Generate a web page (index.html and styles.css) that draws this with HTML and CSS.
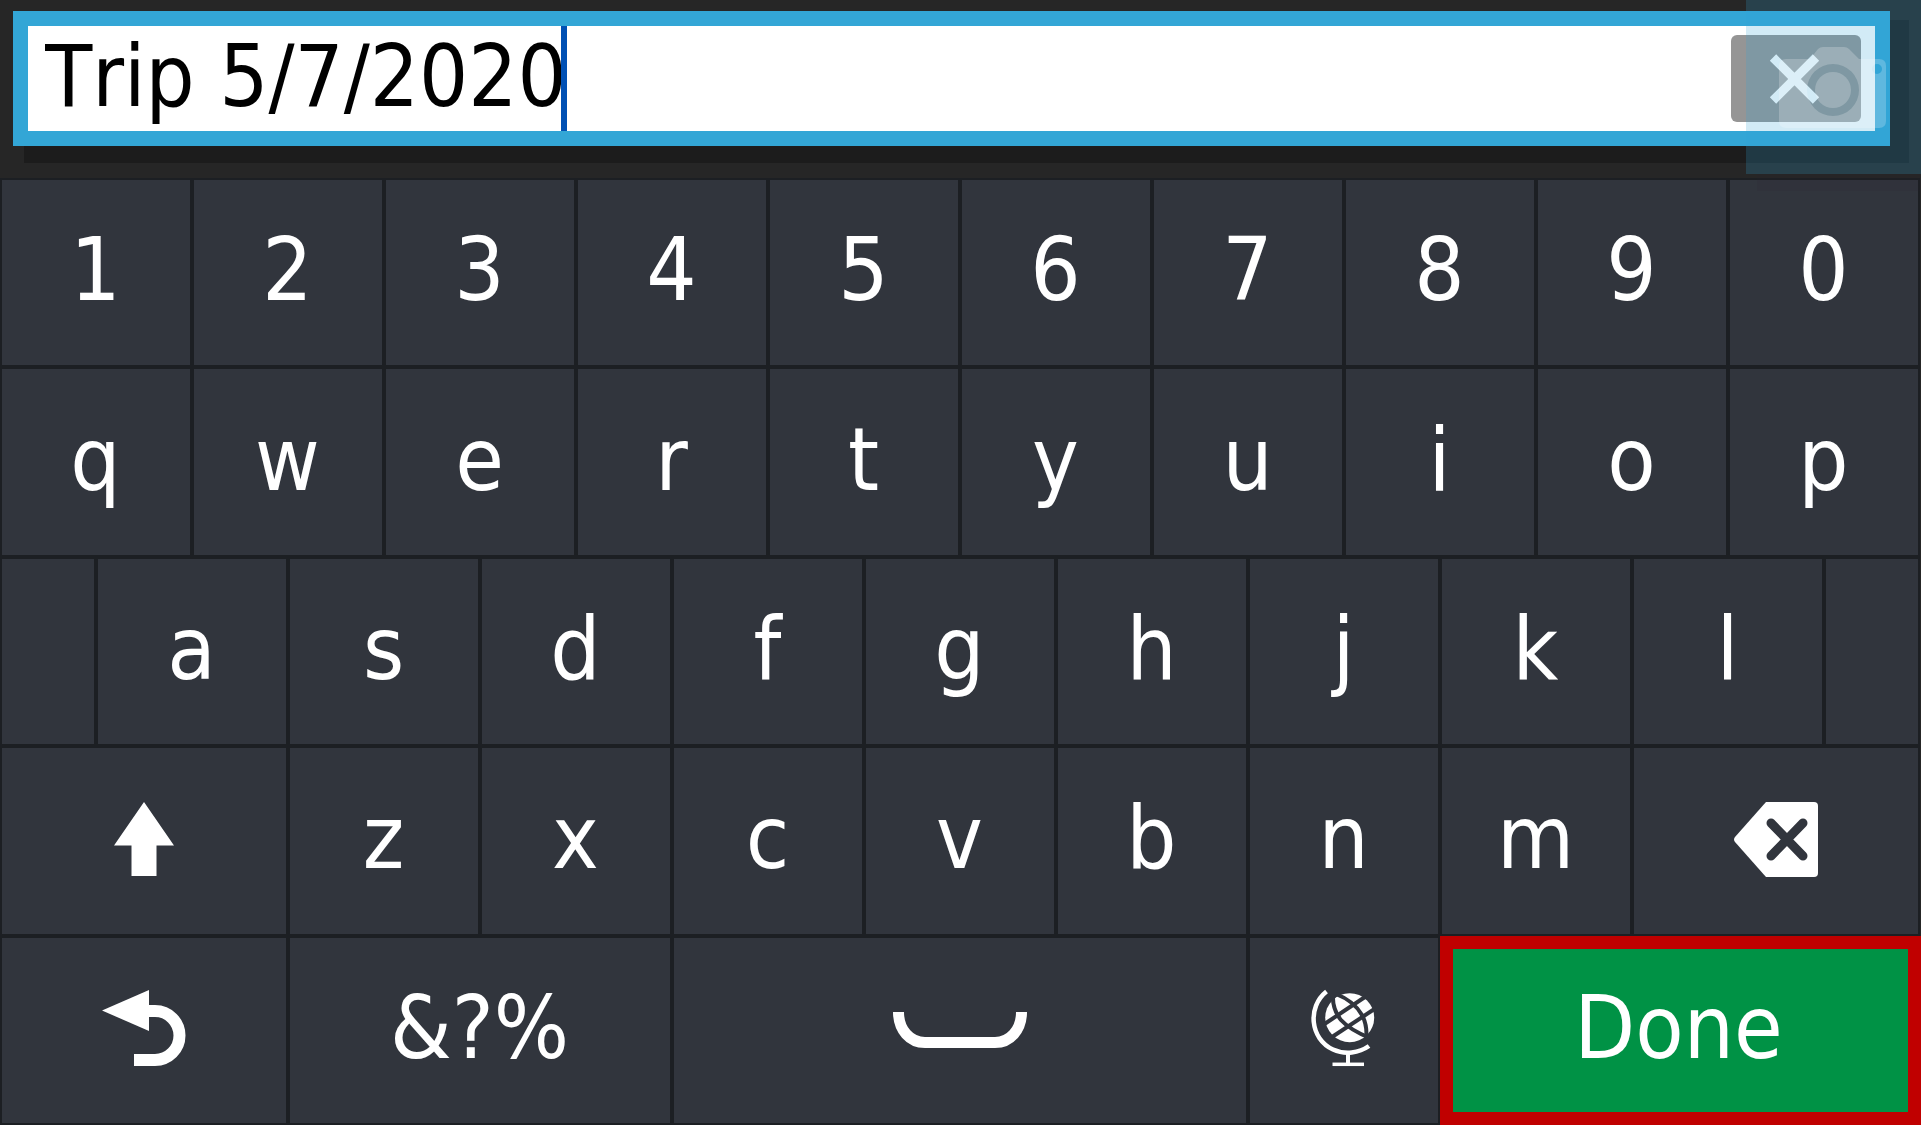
FILE: index.html
```html
<!DOCTYPE html>
<html lang="en">
<head>
    <meta charset="UTF-8">
    <meta name="viewport" content="width=device-width, initial-scale=1.0">
    <title>Keyboard</title>
    <link rel="stylesheet" href="styles.css">
</head>
<body>
    <div class="entry">
        <div class="field">
            <input class="field_text" type="text" value="Trip 5/7/2020" aria-label="Name">
            <span class="caret"></span>
            <button class="clear" type="button" aria-label="Clear">
                <svg width="54" height="52" viewBox="0 0 54 52"><path d="M4 4.500L47 47.500M47 4.500L4 47.500" stroke="#fff" stroke-width="9"/></svg>
            </button>
        </div>
    </div>
    <div class="camera" aria-hidden="true">
        <svg width="107" height="81" viewBox="0 0 107 81">
            <path fill="#fff" fill-opacity=".22" fill-rule="evenodd" d="M7 12H31L39 2Q41 0 44 0H65Q68 0 70 2L80 12H100Q107 12 107 19V74Q107 81 100 81H7Q0 81 0 74V19Q0 12 7 12ZM54 17A26 26 0 1 0 54 69A26 26 0 1 0 54 17ZM98 17A5 5 0 1 0 98 27A5 5 0 1 0 98 17Z"/>
            <circle cx="54" cy="43" r="18" fill="#fff" fill-opacity=".22"/>
        </svg>
    </div>
    <div class="keyboard">
        <button class="key" type="button">1</button>
        <button class="key" type="button">2</button>
        <button class="key" type="button">3</button>
        <button class="key" type="button">4</button>
        <button class="key" type="button">5</button>
        <button class="key" type="button">6</button>
        <button class="key" type="button">7</button>
        <button class="key" type="button">8</button>
        <button class="key" type="button">9</button>
        <button class="key" type="button">0</button>

        <button class="key" type="button">q</button>
        <button class="key" type="button">w</button>
        <button class="key" type="button">e</button>
        <button class="key" type="button">r</button>
        <button class="key" type="button">t</button>
        <button class="key" type="button">y</button>
        <button class="key" type="button">u</button>
        <button class="key" type="button">i</button>
        <button class="key" type="button">o</button>
        <button class="key" type="button">p</button>

        <div class="key half"></div>
        <button class="key" type="button">a</button>
        <button class="key" type="button">s</button>
        <button class="key" type="button">d</button>
        <button class="key" type="button">f</button>
        <button class="key" type="button">g</button>
        <button class="key" type="button">h</button>
        <button class="key" type="button">j</button>
        <button class="key" type="button">k</button>
        <button class="key" type="button">l</button>
        <div class="key half"></div>

        <button class="key wide" type="button" aria-label="Shift">
            <svg width="60" height="76" viewBox="0 -2 60 76"><path fill="#fff" d="M30 0L60 43.500H42.500V74H17.500V43.500H0Z"/></svg>
        </button>
        <button class="key" type="button">z</button>
        <button class="key" type="button">x</button>
        <button class="key" type="button">c</button>
        <button class="key" type="button">v</button>
        <button class="key" type="button">b</button>
        <button class="key" type="button">n</button>
        <button class="key" type="button">m</button>
        <button class="key wide" type="button" aria-label="Backspace">
            <svg width="84" height="78" viewBox="0 -3 84 78">
                <path fill="#fff" d="M32 0H80Q84 0 84 4V71Q84 75 80 75H32L1 40Q-1 37.500 1 35Z"/>
                <path d="M37 21L69 54M69 21L37 54" stroke="#31353d" stroke-width="9" stroke-linecap="round"/>
            </svg>
        </button>

        <button class="key wide" type="button" aria-label="Back">
            <svg width="84" height="78" viewBox="0 -2 84 78">
                <path fill="#fff" d="M0 20.500L47 0V41Z"/>
                <path d="M45 21H53A24.500 24.500 0 0 1 53 70H32" fill="none" stroke="#fff" stroke-width="12"/>
            </svg>
        </button>
        <button class="key symbols" type="button">&amp;?%</button>
        <button class="key space" type="button" aria-label="Space">
            <svg width="134" height="42" viewBox="0 0 134 42"><path d="M5.500 6C5.500 24 17 36.500 32 36.500H102C117 36.500 128.500 24 128.500 6" fill="none" stroke="#fff" stroke-width="11"/></svg>
        </button>
        <button class="key" type="button" aria-label="Language">
            <svg width="66" height="80" viewBox="0 -2 66 80" fill="none">
                <path d="M15.500 2.500C-4 18 -1 50 22 60.500C34 66 48 64 58 57" stroke="#fff" stroke-width="4.500"/>
                <path d="M37 63V75" stroke="#fff" stroke-width="4"/>
                <path d="M21.500 75.300H53" stroke="#fff" stroke-width="3.500"/>
                <circle cx="38.700" cy="28.700" r="24.500" fill="#fff"/>
                <g stroke="#31353d" stroke-width="4">
                    <path d="M12 36L54 8"/>
                    <path d="M21 48L65 19"/>
                    <path d="M25 5Q43 12 51 26Q57 37 55 53"/>
                    <path d="M22 5Q21 20 30 31Q39 41 59 49"/>
                </g>
            </svg>
        </button>
        <button class="key done" type="button">Done</button>
    </div>
</body>
</html>
```
FILE: styles.css
```css
*{
    margin: 0;
    padding: 0;
    box-sizing: border-box;
    font-family: "DejaVu Sans Condensed", "DejaVu Sans", sans-serif;
}
body{
    min-height: 100vh;
    background: #262626;
    display: flex;
    flex-direction: column;
    position: relative;
    overflow-x: hidden;
}
.entry{
    padding: 11px 31px 32px 13px;
}
.field{
    height: 135px;
    display: flex;
    align-items: center;
    background: #fff;
    border: 15px solid #33a6d6;
    box-shadow: 15px 13px 0 4px #1c1c1c;
    padding-left: 17px;
    padding-right: 14px;
}
.field_text{
    field-sizing: content;
    height: 105px;
    padding-bottom: 6px;
    border: none;
    outline: none;
    background: none;
    color: #000;
    font-size: 86px;
    font-kerning: none;
}
.caret{
    width: 6px;
    height: 105px;
    margin-left: -6px;
    background: #0050b4;
}
.clear{
    width: 130px;
    height: 87px;
    margin-left: auto;
    display: flex;
    justify-content: center;
    align-items: center;
    background: #959595;
    border: none;
    border-radius: 6px;
    cursor: pointer;
}
/* see-through camera tile over the end of the field */
.camera{
    position: absolute;
    top: 0;
    right: 0;
    width: 175px;
    height: 174px;
    padding: 47px 0 0 33px;
    background: rgba(51, 166, 214, 0.22);
    box-shadow: 11px 17px 0 rgba(40, 30, 50, 0.12);
    pointer-events: none;
}
.keyboard{
    flex: 1;
    display: grid;
    grid-template-columns: repeat(20, 1fr);
    grid-auto-rows: 1fr;
    padding-right: 1px;
}
.key{
    grid-column: span 2;
    display: flex;
    justify-content: center;
    align-items: center;
    padding-right: 1px;
    padding-bottom: 6px;
    background: #31353d;
    border: 2px solid #1c1f23;
    color: #fff;
    font-size: 88px;
    font-kerning: none;
    cursor: pointer;
}
.half{
    grid-column: span 1;
}
.wide{
    grid-column: span 3;
}
.symbols{
    grid-column: span 4;
}
.space{
    grid-column: span 6;
}
.done{
    grid-column: span 5;
    margin-right: -1px;
    padding-right: 4px;
    background: #009245;
    border: 13px solid #c00000;
}
.key:active{
    background: #454b55;
}
```
